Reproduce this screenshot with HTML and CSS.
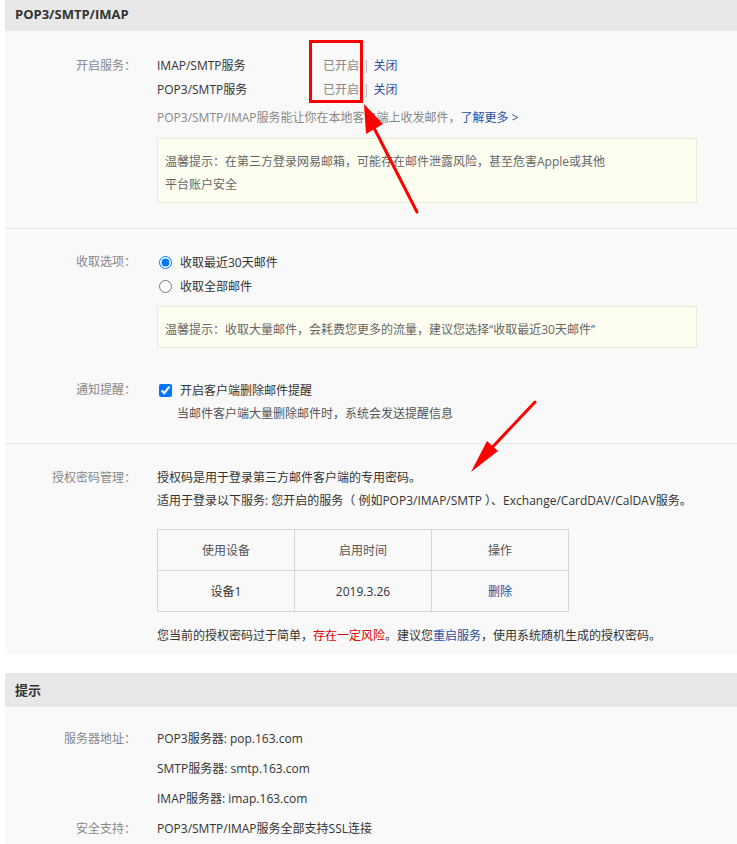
FILE: index.html
```html
<!DOCTYPE html>
<html lang="zh-CN">
<head>
<meta charset="utf-8">
<title>POP3/SMTP/IMAP</title>
<link rel="stylesheet" href="styles.css">
</head>
<body>
<div class="page">
  <div class="panel panel-first">
    <div class="panel-hd">POP3/SMTP/IMAP</div>

    <div class="section s1">
      <div class="row">
        <div class="label">开启服务：</div>
        <div class="content">
          <div class="svc"><span class="svc-name">IMAP/SMTP服务</span><span class="status">已开启</span><span class="sep">|</span><a class="link">关闭</a></div>
          <div class="svc"><span class="svc-name">POP3/SMTP服务</span><span class="status">已开启</span><span class="sep">|</span><a class="link">关闭</a></div>
          <p class="desc">POP3/SMTP/IMAP服务能让你在本地客户端上收发邮件，<a class="link">了解更多 &gt;</a></p>
          <div class="tip tip-two"><p>温馨提示：在第三方登录网易邮箱，可能存在邮件泄露风险，甚至危害Apple或其他平台账户安全</p></div>
        </div>
      </div>
    </div>

    <div class="section s2">
      <div class="row">
        <div class="label">收取选项：</div>
        <div class="content">
          <label class="opt"><input type="radio" name="recv" checked><span>收取最近30天邮件</span></label>
          <label class="opt"><input type="radio" name="recv"><span>收取全部邮件</span></label>
          <div class="tip tip-one"><p>温馨提示：收取大量邮件，会耗费您更多的流量，建议您选择“收取最近30天邮件”</p></div>
        </div>
      </div>
      <div class="row row-notify">
        <div class="label">通知提醒：</div>
        <div class="content">
          <label class="opt"><input type="checkbox" checked><span>开启客户端删除邮件提醒</span></label>
          <p class="sub">当邮件客户端大量删除邮件时，系统会发送提醒信息</p>
        </div>
      </div>
    </div>

    <div class="section s3">
      <div class="row">
        <div class="label">授权密码管理：</div>
        <div class="content">
          <p class="line">授权码是用于登录第三方邮件客户端的专用密码。</p>
          <p class="line">适用于登录以下服务: 您开启的服务（ 例如POP3/IMAP/SMTP ）、Exchange/CardDAV/CalDAV服务。</p>
          <table class="devices">
            <thead>
              <tr><th>使用设备</th><th>启用时间</th><th>操作</th></tr>
            </thead>
            <tbody>
              <tr><td>设备1</td><td>2019.3.26</td><td><a class="link">删除</a></td></tr>
            </tbody>
          </table>
          <p class="line warn">您当前的授权密码过于简单，<span class="red">存在一定风险</span>。建议您<a class="link">重启服务</a>，使用系统随机生成的授权密码。</p>
        </div>
      </div>
    </div>
  </div>

  <div class="panel panel-second">
    <div class="panel-hd">提示</div>
    <div class="section s4">
      <div class="row">
        <div class="label">服务器地址：</div>
        <div class="content">
          <p class="srv">POP3服务器: pop.163.com</p>
          <p class="srv">SMTP服务器: smtp.163.com</p>
          <p class="srv">IMAP服务器: imap.163.com</p>
        </div>
      </div>
      <div class="row">
        <div class="label">安全支持：</div>
        <div class="content">
          <p class="srv">POP3/SMTP/IMAP服务全部支持SSL连接</p>
        </div>
      </div>
    </div>
  </div>
</div>

<svg class="annot" width="737" height="844" viewBox="0 0 737 844" aria-hidden="true">
  <rect x="310.5" y="41.5" width="51" height="60" fill="none" stroke="#ff0000" stroke-width="3"/>
  <line x1="417" y1="212" x2="372" y2="124" stroke="#ff0000" stroke-width="3" stroke-linecap="round"/>
  <polygon points="364,104 366,134 383,124" fill="#ff0000"/>
  <line x1="535" y1="402" x2="485" y2="455" stroke="#ff0000" stroke-width="3" stroke-linecap="round"/>
  <polygon points="471,472 487,441 498,451" fill="#ff0000"/>
</svg>
</body>
</html>
```

FILE: styles.css
```css
* { box-sizing: border-box; }

body {
  margin: 0;
  position: relative;
  background: #fff;
  color: #333;
  font-family: "Open Sans", "Noto Sans CJK SC", sans-serif;
  font-size: 12px;
  overflow: hidden;
}

p { margin: 0; }
a { text-decoration: none; }

.page {
  padding-left: 5px;
}

.panel {
  background: #f9f9f9;
}

.panel-first {
  margin-top: -3px;
}

.panel-second {
  margin-top: 19px;
  padding-bottom: 40px;
}

.panel-hd {
  height: 34px;
  line-height: 34px;
  padding-left: 10px;
  background: #e8e8e8;
  font-size: 13px;
  font-weight: bold;
  color: #333;
}

.section {
  border-bottom: 1px solid #e8e8e8;
}

.row {
  display: flex;
  align-items: flex-start;
}

.label {
  flex: none;
  width: 131px;
  margin-right: 21px;
  text-align: right;
  color: #888;
  line-height: 24px;
}

.content {
  flex: 1;
  min-width: 0;
}

.link { color: #1f4ea3; cursor: pointer; }
.red { color: #e00000; }

/* section 1 */
.s1 { padding: 23px 0 25px; }

.svc {
  line-height: 24px;
  display: flex;
  align-items: baseline;
}

.svc-name {
  width: 166px;
  flex: none;
}

.status {
  color: #888;
}

.sep {
  color: #aaa;
  padding: 0 4px;
}

.desc {
  margin-top: 4px;
  line-height: 24px;
  color: #888;
}

.tip {
  width: 540px;
  background: #fdfdf0;
  border: 1px solid #ebebd3;
  color: #666;
  padding: 11px 7px 6px;
}

.tip p { line-height: 23px; }

.tip-two { margin-top: 8px; }
.tip-two p { max-width: 446px; }

/* section 2 */
.s2 { padding: 21px 0 17px; }

.opt {
  display: flex;
  align-items: center;
  height: 24px;
}

.opt input {
  width: 13px;
  height: 13px;
  margin: 0 8px 0 2px;
  accent-color: #0075ff;
}

.tip-one {
  margin-top: 8px;
}

.row-notify { margin-top: 30px; }

.sub {
  padding-left: 20px;
  line-height: 24px;
  color: #555;
}

/* section 3 */
.s3 {
  padding: 22px 0 7px;
  border-bottom: 0;
}

.s3 .label { line-height: 23px; }

.line { line-height: 23px; }

.devices {
  margin-top: 17px;
  margin-bottom: 12px;
  border-collapse: collapse;
  width: 412px;
  table-layout: fixed;
}

.devices th,
.devices td {
  width: 137px;
  height: 41px;
  padding: 0;
  border: 1px solid #d6d6d6;
  text-align: center;
  font-weight: normal;
  color: #555;
}

.devices td { color: #333; }

/* panel 2 */
.s4 {
  padding-top: 17px;
  border-bottom: 0;
}

.s4 .label { line-height: 30px; }

.srv { line-height: 30px; }

/* annotation overlay */
.annot {
  position: absolute;
  left: 0;
  top: 0;
  pointer-events: none;
}
```
